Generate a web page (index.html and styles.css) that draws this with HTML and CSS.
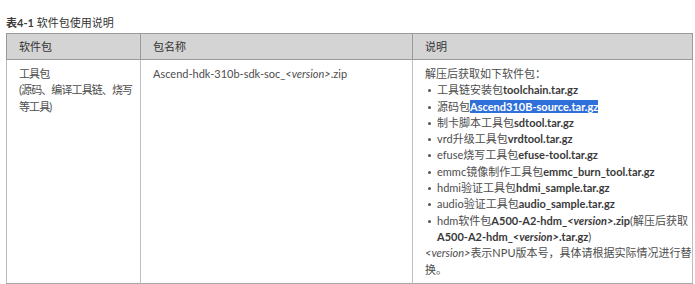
FILE: index.html
```html
<!DOCTYPE html>
<html lang="zh">
<head>
<meta charset="utf-8">
<link rel="stylesheet" href="styles.css">
</head>
<body>
<div class="page">
  <p class="caption"><b>表4-1</b> 软件包使用说明</p>
  <table class="tbl">
    <colgroup>
      <col class="c1"><col class="c2"><col class="c3">
    </colgroup>
    <thead>
      <tr><th>软件包</th><th>包名称</th><th>说明</th></tr>
    </thead>
    <tbody>
      <tr>
        <td class="kind">工具包<br>(源码、编译工具链、烧写<br>等工具)</td>
        <td>Ascend-hdk-310b-sdk-soc_<i>&lt;version&gt;</i>.zip</td>
        <td>
          <div class="desc">
            <p>解压后获取如下软件包：</p>
            <ul>
              <li>工具链安装包<b>toolchain.tar.gz</b></li>
              <li>源码包<b class="sel">Ascend310B-source.tar.gz</b></li>
              <li>制卡脚本工具包<b>sdtool.tar.gz</b></li>
              <li>vrd升级工具包<b>vrdtool.tar.gz</b></li>
              <li>efuse烧写工具包<b>efuse-tool.tar.gz</b></li>
              <li>emmc镜像制作工具包<b>emmc_burn_tool.tar.gz</b></li>
              <li>hdmi验证工具包<b>hdmi_sample.tar.gz</b></li>
              <li>audio验证工具包<b>audio_sample.tar.gz</b></li>
              <li>hdm软件包<b>A500-A2-hdm_<i>&lt;version&gt;</i>.zip</b>(解压后获取<br><b>A500-A2-hdm_<i>&lt;version&gt;</i>.tar.gz</b>)</li>
            </ul>
            <p><i>&lt;version&gt;</i>表示NPU版本号，具体请根据实际情况进行替<br>换。</p>
          </div>
        </td>
      </tr>
    </tbody>
  </table>
</div>
</body>
</html>
```
FILE: styles.css
```css
html, body {
  margin: 0;
  padding: 0;
  background: #ffffff;
}
.page {
  padding: 16px 3px 0 6px;
  font-family: "Lato", "Noto Sans CJK SC", sans-serif;
  font-size: 11px;
  color: #4d4d4d;
}
.caption {
  margin: 0 0 3px 0;
  line-height: 14px;
  color: #333;
}
.caption b {
  font-weight: 700;
}
.tbl {
  border-collapse: collapse;
  width: 686px;
  table-layout: fixed;
}
.c1 { width: 134px; }
.c2 { width: 272px; }
.c3 { width: 280px; }
.tbl th {
  background: #d4d4d4;
  border: 1px solid #9a9a9a;
  text-align: left;
  font-weight: normal;
  color: #333;
  padding: 5px 12px;
  line-height: 15px;
}
.tbl td {
  border: 1px solid #bdbdbd;
  border-bottom-color: #a8a8a8;
  vertical-align: top;
  padding: 6px 8px 5px 12px;
  line-height: 16.3px;
  white-space: nowrap;
}
.tbl td.kind {
  letter-spacing: -0.9px;
}
.desc p { margin: 0; }
.desc ul {
  margin: 0;
  padding: 0 0 0 12px;
  list-style: none;
}
.desc li { position: relative; }
.desc li::before {
  content: "";
  position: absolute;
  left: -9px;
  top: 7px;
  width: 3px;
  height: 3px;
  border-radius: 50%;
  background: #555;
}
b { font-weight: 700; color: #3a3a3a; }
i { font-style: italic; }
.sel {
  background: #2f6fd9;
  color: #fff;
}
```
